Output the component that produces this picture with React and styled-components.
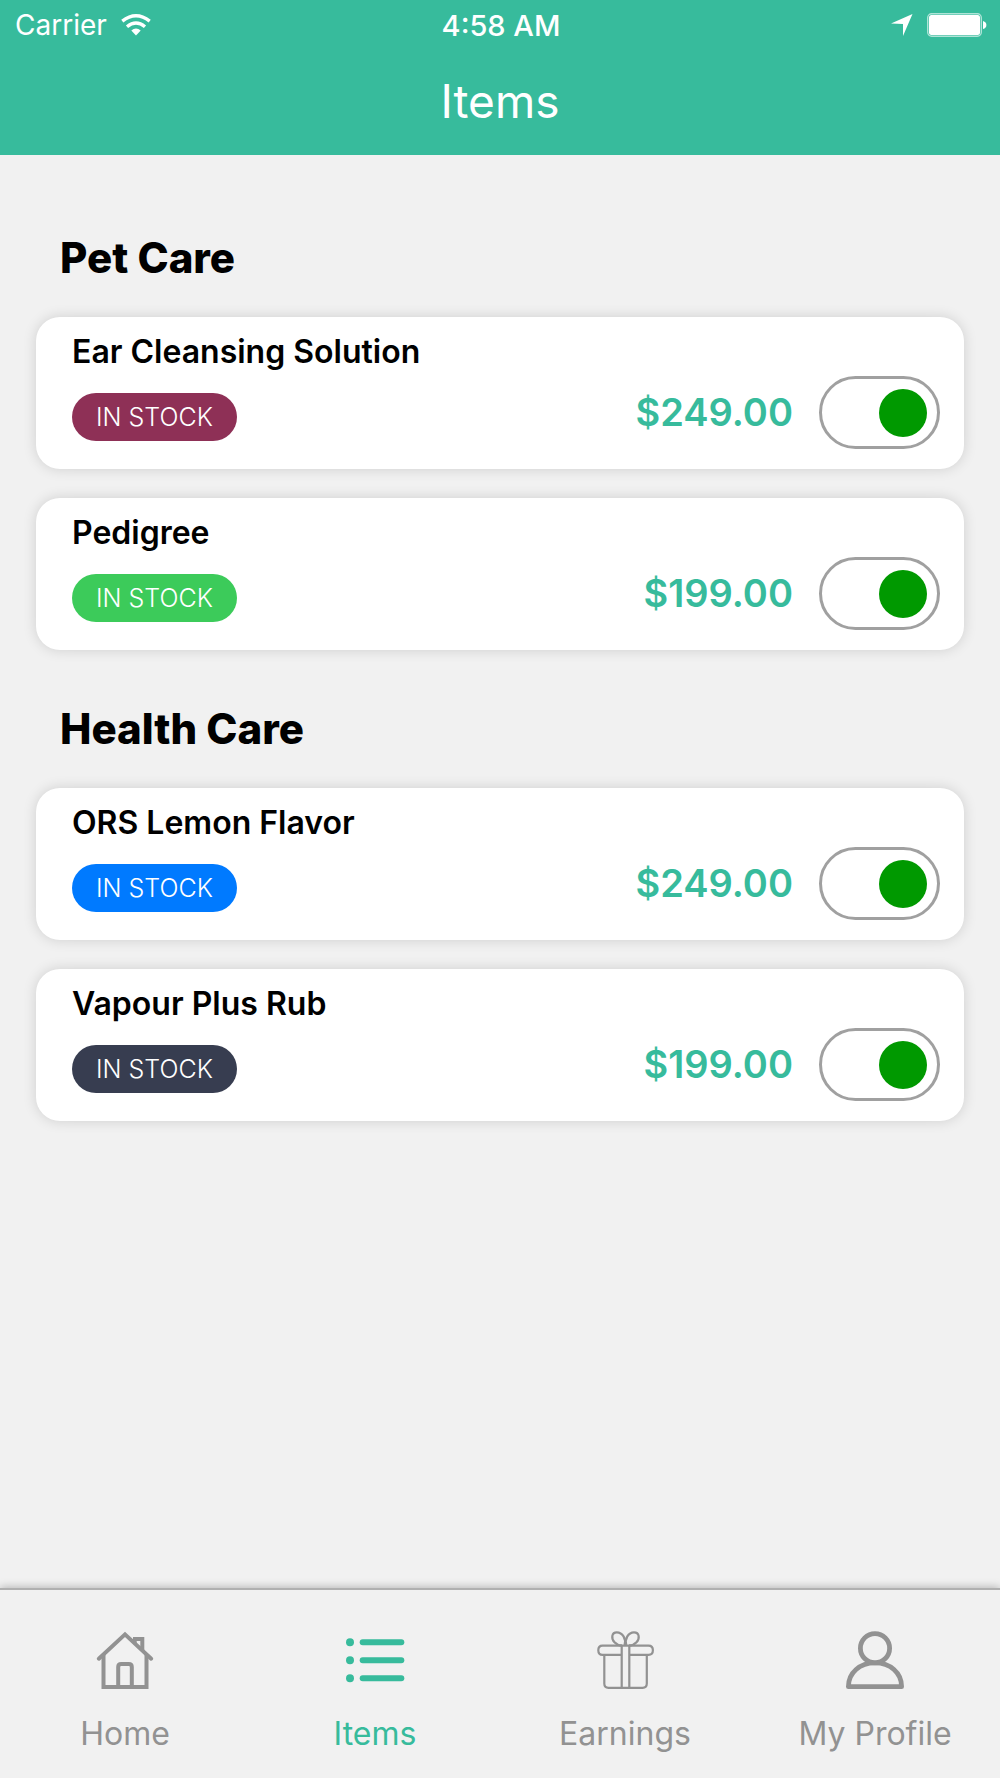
import React, { useState } from "react";
import styled, { createGlobalStyle } from "styled-components";

const sections = [
  {
    title: "Pet Care",
    items: [
      { name: "Ear Cleansing Solution", price: "$249.00", color: "#8e3056" },
      { name: "Pedigree", price: "$199.00", color: "#3ccb5a" },
    ],
  },
  {
    title: "Health Care",
    items: [
      { name: "ORS Lemon Flavor", price: "$249.00", color: "#007aff" },
      { name: "Vapour Plus Rub", price: "$199.00", color: "#373d50" },
    ],
  },
];

const HomeIcon = () => (
  <svg viewBox="0 0 60 60" fill="none" stroke="currentColor" strokeWidth="4">
    <path d="M3.8 28.7 L30 4.4 L56.2 28.7" strokeLinecap="round" />
    <path d="M8.5 25 V57 H51.5 V25" />
    <path d="M38 9 H47.3 V21" />
    <path d="M40.2 8 V14" strokeWidth="3" />
    <path d="M23.2 57 V37 Q23.2 34 26.2 34 H33.8 Q36.8 34 36.8 37 V57" />
  </svg>
);

const ListIcon = () => (
  <svg viewBox="0 0 60 60" fill="currentColor">
    <circle cx="5" cy="12.3" r="4" />
    <circle cx="5" cy="30.3" r="4" />
    <circle cx="5" cy="48.2" r="4" />
    <rect x="14.7" y="9.3" width="44.6" height="6" rx="3" />
    <rect x="14.7" y="27.3" width="44.6" height="6" rx="3" />
    <rect x="14.7" y="45.2" width="44.6" height="6" rx="3" />
  </svg>
);

const GiftIcon = () => (
  <svg viewBox="0 0 60 60" fill="none" stroke="currentColor" strokeWidth="2.2">
    <path d="M26.7 15.6 H7.5 Q3.3 15.6 3.3 20.2 T7.5 24.8 H26.7" />
    <path d="M34.3 15.6 H53.5 Q57.9 15.6 57.9 20.2 T53.5 24.8 H34.3" />
    <path d="M9.3 25 V53.5 Q9.3 57.8 13.5 57.8 H47.6 Q51.8 57.8 51.8 53.5 V25" />
    <path d="M26.7 57.8 V15.6 H34.3 V57.8" />
    <path d="M29.6 15 C31.5 9 27.5 2.3 21.8 2.3 C16.5 2.3 16 8.5 19.5 12.3 C21.5 14.4 24 15.6 27 15.6" />
    <path d="M31.2 15 C29.5 9 33.3 2.3 39 2.3 C44.5 2.3 45 8.5 41.5 12.3 C39.5 14.4 37 15.6 34 15.6" />
  </svg>
);

const ProfileIcon = () => (
  <svg viewBox="0 0 60 60" fill="none" stroke="currentColor" strokeWidth="4.8">
    <circle cx="30" cy="18.2" r="14.6" />
    <path
      d="M3.4 56.7 C3.4 42.5 15 32.9 30 32.9 S56.6 42.5 56.6 56.7 Z"
      strokeLinejoin="round"
    />
  </svg>
);

const tabs = [
  { label: "Home", icon: HomeIcon },
  { label: "Items", icon: ListIcon },
  { label: "Earnings", icon: GiftIcon },
  { label: "My Profile", icon: ProfileIcon },
];

const App = () => {
  const [active, setActive] = useState("Items");

  return (
    <>
      <GlobalStyle />
      <Screen>
        <Header>
          <StatusBar>
            <div className="left">
              <span>Carrier</span>
              <svg width="30" height="22" viewBox="0 0 30 22" fill="none">
                <path
                  d="M1.3 7.2 Q15 -3.6 28.7 7.2"
                  stroke="#fff"
                  strokeWidth="3.4"
                />
                <path
                  d="M6 12.8 Q15 5.4 24 12.8"
                  stroke="#fff"
                  strokeWidth="3.4"
                />
                <path d="M10.3 16.6 Q15 12.2 19.7 16.6 L15 21.6 Z" fill="#fff" />
              </svg>
            </div>
            <strong>4:58 AM</strong>
            <div className="right">
              <svg width="22" height="22" viewBox="0 0 22 22">
                <path d="M21.5 0 L12 22 V10 L0 9.4 Z" fill="#fff" />
              </svg>
              <svg width="60" height="24" viewBox="0 0 60 24">
                <rect
                  x="0.7"
                  y="0.7"
                  width="53.6"
                  height="22.6"
                  rx="4"
                  fill="none"
                  stroke="#fff"
                  strokeOpacity="0.6"
                  strokeWidth="1.4"
                />
                <rect x="2" y="2" width="51" height="20" rx="2.5" fill="#fff" />
                <path d="M56 8 Q59.4 9 59.4 12 T56 16 Z" fill="#fff" />
              </svg>
            </div>
          </StatusBar>
          <Title>Items</Title>
        </Header>

        <Content>
          {sections.map((section) => (
            <Section key={section.title}>
              <h2>{section.title}</h2>
              {section.items.map((item) => (
                <Card key={item.name}>
                  <div className="info">
                    <h3>{item.name}</h3>
                    <Badge $color={item.color}>IN STOCK</Badge>
                  </div>
                  <Price>{item.price}</Price>
                  <Toggle
                    type="checkbox"
                    defaultChecked
                    aria-label={item.name}
                  />
                </Card>
              ))}
            </Section>
          ))}
        </Content>

        <TabBar>
          {tabs.map(({ label, icon: Icon }) => (
            <Tab
              key={label}
              type="button"
              $active={active === label}
              onClick={() => setActive(label)}
            >
              <Icon />
              <span>{label}</span>
            </Tab>
          ))}
        </TabBar>
      </Screen>
    </>
  );
};

const GlobalStyle = createGlobalStyle`
  * {
    box-sizing: border-box;
  }
  body {
    margin: 0;
    background: #f1f1f1;
    font-family: Inter, "Liberation Sans", sans-serif;
  }
`;

const Screen = styled.div`
  display: flex;
  flex-direction: column;
  min-height: 100vh;
`;

const Header = styled.header`
  display: flex;
  flex-direction: column;
  background: #37bb9c;
  color: #fff;
  padding-bottom: 25px;
`;

const StatusBar = styled.div`
  display: grid;
  grid-template-columns: 1fr auto 1fr;
  align-items: center;
  height: 50px;
  padding: 0 13px 0 15px;
  font-size: 28px;
  & strong {
    font-size: 29px;
    font-weight: 500;
  }
  & .left,
  & .right {
    display: flex;
    align-items: center;
    gap: 14px;
  }
  & .right {
    justify-content: flex-end;
  }
`;

const Title = styled.h1`
  margin: 0;
  padding: 23px 0 1px;
  font-size: 46px;
  font-weight: 400;
  line-height: 56px;
  text-align: center;
`;

const Content = styled.main`
  flex: 1;
  padding: 75px 36px 36px;
`;

const Section = styled.section`
  display: flex;
  flex-direction: column;
  gap: 29px;
  margin-bottom: 51px;
  & h2 {
    margin: 0 0 2px;
    padding-left: 24px;
    font-size: 42px;
    font-weight: 800;
    line-height: 56px;
    color: #000;
  }
`;

const Card = styled.article`
  display: flex;
  align-items: flex-end;
  gap: 26px;
  padding: 15px 24px 20px 36px;
  background: #fff;
  border-radius: 24px;
  box-shadow: 0 0 14px rgba(0, 0, 0, 0.14);
  & .info {
    flex: 1;
    display: flex;
    flex-direction: column;
    align-items: flex-start;
    gap: 21px;
    padding-bottom: 8px;
  }
  & h3 {
    margin: 0;
    font-size: 32px;
    font-weight: 600;
    line-height: 40px;
    color: #000;
  }
`;

const Badge = styled.span`
  padding: 0 24px;
  border-radius: 24px;
  background: ${(props) => props.$color};
  color: #fff;
  font-size: 25px;
  font-weight: 300;
  line-height: 48px;
`;

const Price = styled.span`
  font-size: 38px;
  font-weight: 600;
  line-height: 74px;
  color: #37bb9c;
`;

const Toggle = styled.input`
  appearance: none;
  display: flex;
  align-items: center;
  width: 121px;
  height: 73px;
  margin: 0;
  padding: 0 10px;
  border: 3px solid #a0a0a0;
  border-radius: 37px;
  cursor: pointer;
  &::before {
    content: "";
    width: 48px;
    height: 48px;
    border-radius: 50%;
    background: #999;
  }
  &:checked {
    justify-content: flex-end;
  }
  &:checked::before {
    background: #009900;
  }
`;

const TabBar = styled.nav`
  display: grid;
  grid-template-columns: repeat(4, 1fr);
  border-top: 2px solid #b0b0b0;
  background: #f1f1f1;
  box-shadow: 0 -1px 8px rgba(0, 0, 0, 0.25);
`;

const Tab = styled.button`
  display: flex;
  flex-direction: column;
  align-items: center;
  gap: 24px;
  padding: 40px 0 24px;
  border: none;
  background: none;
  font-family: inherit;
  font-size: 32px;
  line-height: 40px;
  color: ${(props) => (props.$active ? "#37bb9c" : "#929292")};
  cursor: pointer;
  & svg {
    width: 60px;
    height: 60px;
  }
`;

export default App;
